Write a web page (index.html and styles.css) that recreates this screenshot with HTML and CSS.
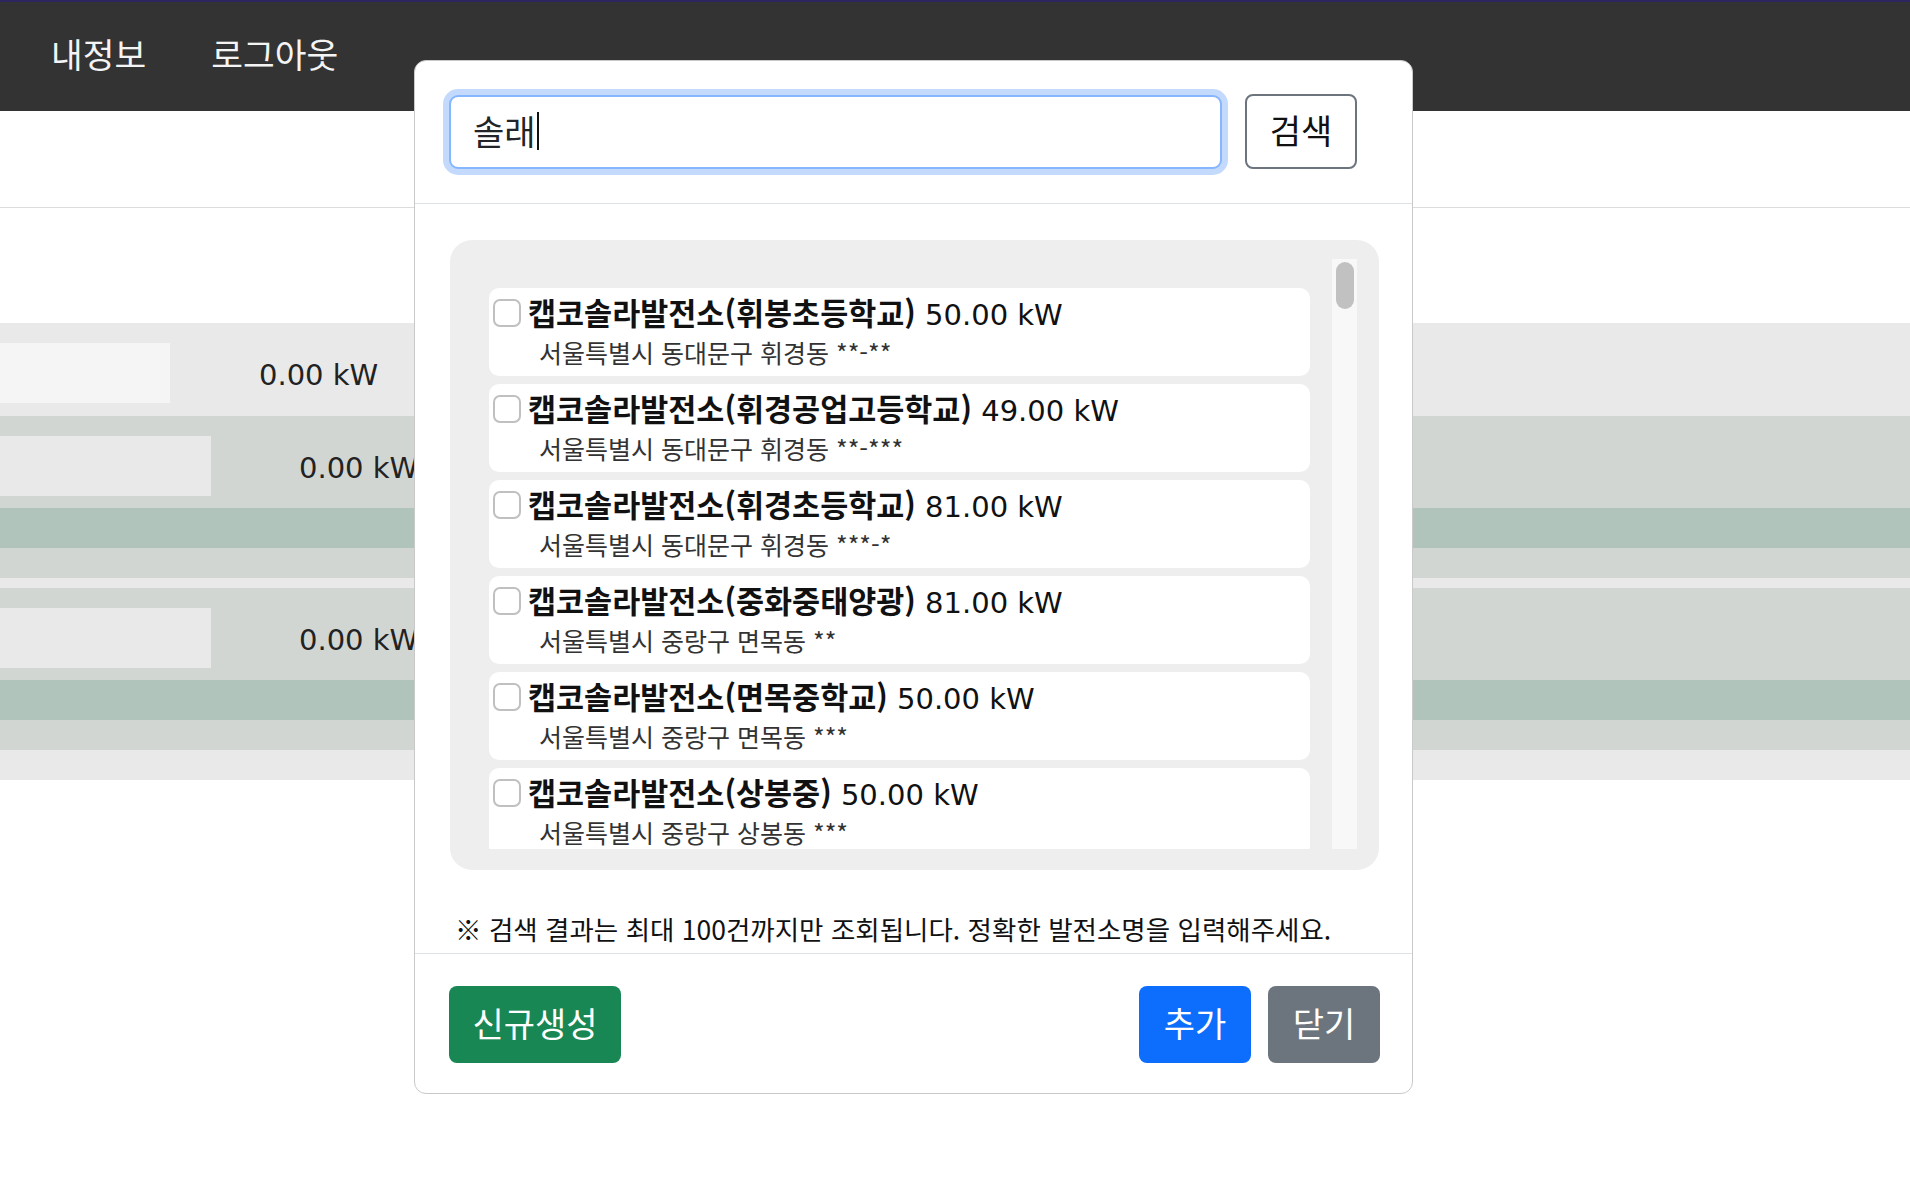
FILE: index.html
```html
<!DOCTYPE html>
<html lang="ko">
<head>
<meta charset="utf-8">
<title>발전소 검색</title>
<link rel="stylesheet" href="styles.css">
</head>
<body>
<header class="navbar">
  <a class="nav-link" href="#">내정보</a>
  <a class="nav-link" href="#">로그아웃</a>
</header>
<div class="page-top"></div>
<div class="table">
  <div class="trow light">
    <div class="cellbox w1"></div>
    <span class="val">0.00 kW</span>
  </div>
  <div class="trow mid">
    <div class="cellbox w2"></div>
    <span class="val">0.00 kW</span>
  </div>
  <div class="band green"></div>
  <div class="band mid thin30"></div>
  <div class="band light thin10"></div>
  <div class="trow mid">
    <div class="cellbox w2"></div>
    <span class="val">0.00 kW</span>
  </div>
  <div class="band green"></div>
  <div class="band mid thin30"></div>
  <div class="band light thin30"></div>
</div>

<div class="modal">
  <div class="modal-header">
    <div class="search-input"><span class="typed">솔래</span><span class="caret"></span></div>
    <button class="btn btn-outline">검색</button>
  </div>
  <div class="modal-body">
    <div class="result-box">
      <div class="result-scroll">
        <label class="item">
          <span class="item-top"><span class="check"></span><span class="title"><b>캡코솔라발전소(휘봉초등학교)</b> 50.00 kW</span></span>
          <span class="addr">서울특별시 동대문구 휘경동 **-**</span>
        </label>
        <label class="item">
          <span class="item-top"><span class="check"></span><span class="title"><b>캡코솔라발전소(휘경공업고등학교)</b> 49.00 kW</span></span>
          <span class="addr">서울특별시 동대문구 휘경동 **-***</span>
        </label>
        <label class="item">
          <span class="item-top"><span class="check"></span><span class="title"><b>캡코솔라발전소(휘경초등학교)</b> 81.00 kW</span></span>
          <span class="addr">서울특별시 동대문구 휘경동 ***-*</span>
        </label>
        <label class="item">
          <span class="item-top"><span class="check"></span><span class="title"><b>캡코솔라발전소(중화중태양광)</b> 81.00 kW</span></span>
          <span class="addr">서울특별시 중랑구 면목동 **</span>
        </label>
        <label class="item">
          <span class="item-top"><span class="check"></span><span class="title"><b>캡코솔라발전소(면목중학교)</b> 50.00 kW</span></span>
          <span class="addr">서울특별시 중랑구 면목동 ***</span>
        </label>
        <label class="item">
          <span class="item-top"><span class="check"></span><span class="title"><b>캡코솔라발전소(상봉중)</b> 50.00 kW</span></span>
          <span class="addr">서울특별시 중랑구 상봉동 ***</span>
        </label>
      </div>
      <div class="scrollbar"><div class="thumb"></div></div>
    </div>
    <p class="note">※ 검색 결과는 최대 100건까지만 조회됩니다. 정확한 발전소명을 입력해주세요.</p>
  </div>
  <div class="modal-footer">
    <button class="btn btn-green">신규생성</button>
    <div class="footer-right">
      <button class="btn btn-blue">추가</button>
      <button class="btn btn-grey">닫기</button>
    </div>
  </div>
</div>
</body>
</html>
```
FILE: styles.css
```css
* { box-sizing: border-box; }
html, body { margin: 0; padding: 0; }
body {
  background: #fff;
  font-family: "DejaVu Sans", "Noto Sans CJK KR", sans-serif;
  color: #212529;
  width: 1910px;
  height: 1186px;
  overflow: hidden;
  position: relative;
}
.navbar {
  height: 111px;
  background: #333333;
  border-top: 2px solid #2c2560;
  display: flex;
  align-items: center;
  padding: 0 0 6px 51px;
  gap: 65px;
}
.nav-link {
  font-family: "Noto Sans CJK KR", sans-serif;
  font-size: 34.5px;
  color: #f4f4f4;
  text-decoration: none;
  line-height: 1;
}
.page-top {
  height: 97px;
  border-bottom: 1px solid #dcdcdc;
}
.table {
  margin-top: 115px;
}
.trow {
  display: flex;
  align-items: center;
  height: 93px;
  padding: 20px 0 13px 0;
}
.trow.mid { height: 92px; padding-bottom: 12px; }
.light { background: #e8e9e8; }
.mid { background: #d2d6d3; }
.green { background: #b0c4bb; }
.cellbox { height: 60px; }
.cellbox.w1 { width: 170px; background: #f4f5f4; margin-right: 89px; }
.cellbox.w2 { width: 211px; background: #e8e9e8; margin-right: 88px; }
.val {
  font-size: 29px;
  color: #222;
  padding-top: 4px;
}
.band { height: 40px; }
.band.thin30 { height: 30px; }
.band.thin10 { height: 10px; }

.modal {
  position: absolute;
  left: 414px;
  top: 60px;
  width: 999px;
  background: #fff;
  border: 1px solid #c9c9c9;
  border-radius: 12px;
}
.modal-header {
  display: flex;
  align-items: center;
  padding: 33px 35px 34px 34px;
  border-bottom: 1px solid #dee2e6;
}
.search-input {
  display: flex;
  align-items: center;
  width: 773px;
  height: 74px;
  border: 2px solid #86b7fe;
  border-radius: 9px;
  box-shadow: 0 0 0 6px #c3dafd;
  padding: 0 0 2px 22px;
  font-family: "Noto Sans CJK KR", sans-serif;
  font-size: 34px;
  color: #212529;
  background: #fff;
}
.caret {
  width: 2px;
  height: 38px;
  background: #111;
  margin-left: 1px;
}
.btn {
  font-family: "Noto Sans CJK KR", sans-serif;
  font-size: 34px;
  border-radius: 8px;
  border: 1px solid transparent;
  height: 77px;
  padding: 0 0 3px 0;
  color: #fff;
  line-height: 1;
  cursor: pointer;
}
.btn-outline {
  margin-left: 23px;
  width: 112px;
  height: 75px;
  color: #111;
  background: #fff;
  border: 2px solid #6c757d;
}
.modal-body {
  padding: 36px 33px 6px 35px;
}
.result-box {
  display: flex;
  background: #eeeeee;
  border-radius: 22px;
  padding: 19px 22px 21px 20px;
}
.result-scroll {
  flex: 1;
  height: 590px;
  overflow: hidden;
  padding: 29px 0 0 19px;
}
.scrollbar {
  width: 25px;
  height: 590px;
  background: #f8f8f8;
  padding: 3px 3px 0 4px;
}
.thumb {
  height: 47px;
  background: #c1c1c1;
  border-radius: 9px;
}
.item {
  display: flex;
  flex-direction: column;
  width: 821px;
  height: 88px;
  background: #fff;
  border-radius: 10px;
  margin-bottom: 8px;
  padding: 11px 4px 0 4px;
  cursor: pointer;
}
.item-top {
  display: flex;
  align-items: center;
  height: 28px;
}
.check {
  width: 28px;
  height: 28px;
  border: 2px solid #c0c0c0;
  border-radius: 7px;
  background: #fff;
  flex: none;
}
.title {
  margin-left: 7px;
  font-size: 29px;
  line-height: 28px;
  color: #111;
  white-space: nowrap;
}
.title b {
  font-family: "Noto Sans CJK KR", sans-serif;
  font-weight: 700;
  font-size: 30.5px;
}
.addr {
  margin-top: 10px;
  padding-left: 46px;
  font-family: "Noto Sans CJK KR", sans-serif;
  font-size: 25px;
  line-height: 30px;
  color: #333;
  white-space: nowrap;
}
.note {
  margin: 41px 0 0 5px;
  font-family: "Noto Sans CJK KR", sans-serif;
  font-size: 26.5px;
  line-height: 36px;
  color: #111;
  white-space: nowrap;
}
.modal-footer {
  display: flex;
  justify-content: space-between;
  align-items: center;
  border-top: 1px solid #dee2e6;
  padding: 32px 32px 30px 34px;
}
.footer-right { display: flex; gap: 17px; }
.btn-green { background: #198754; width: 172px; }
.btn-blue { background: #0d6efd; width: 112px; }
.btn-grey { background: #6c757d; width: 112px; }
```
